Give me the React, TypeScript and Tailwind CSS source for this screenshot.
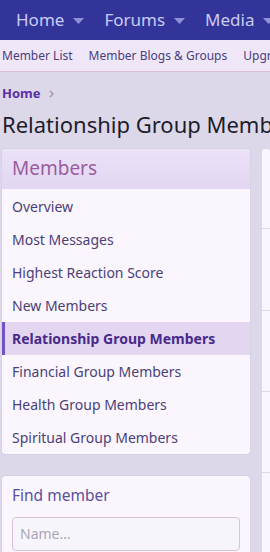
import React from 'react';

const font = { fontFamily: '"Segoe UI", "Noto Sans", "Open Sans", sans-serif' };

const navTabs = ['Home', 'Forums', 'Media'];
const subLinks = ['Member List', 'Member Blogs & Groups', 'Upgrade'];
const memberLinks = [
	'Overview',
	'Most Messages',
	'Highest Reaction Score',
	'New Members',
	'Relationship Group Members',
	'Financial Group Members',
	'Health Group Members',
	'Spiritual Group Members',
];
const ACTIVE = 'Relationship Group Members';

const Caret = () => (
	<svg width="11" height="7" viewBox="0 0 11 7" className="ml-[9px] mt-[2px]">
		<path d="M0 0h11L5.5 6z" fill="#8d91d6" />
	</svg>
);

export default function App() {
	return (
		<div
			className="w-[270px] h-[552px] overflow-hidden bg-[#dcd8ea]"
			style={font}
		>
			{/* top nav */}
			<div className="h-[40px] bg-[#33349a] flex items-center pl-[16px] gap-[20px] whitespace-nowrap">
				{navTabs.map((t) => (
					<div key={t} className="flex items-center text-[17px] text-[#c9cbf2]">
						{t}
						<Caret />
					</div>
				))}
			</div>
			<div className="h-[32px] bg-[#efe7f8] border-b border-[#dcbfd8] flex items-center pl-[2px] gap-[16px] whitespace-nowrap text-[12px] text-[#4a3d7e]">
				{subLinks.map((l) => (
					<span key={l}>{l}</span>
				))}
			</div>

			{/* breadcrumb + title */}
			<div className="pt-[12px] pl-[2px] flex items-center gap-[8px]">
				<span className="text-[13px] font-bold text-[#5b2fa3]">Home</span>
				<svg width="6" height="8" viewBox="0 0 6 8">
					<path d="M1 1l3 3-3 3" stroke="#9a95b0" strokeWidth="1.3" fill="none" />
				</svg>
			</div>
			<div className="pl-[2px] mt-[5px] text-[22px] leading-[30px] text-[#1d1d2b] whitespace-nowrap">
				Relationship Group Members
			</div>

			<div className="flex gap-[12px] mt-[10px] pl-[2px]">
				{/* sidebar */}
				<div className="w-[248px] shrink-0 flex flex-col gap-[22px]">
					<div className="rounded-[3px] overflow-hidden bg-[#fbf6fd] shadow-[0_0_1px_rgba(120,100,160,0.5)]">
						<div className="h-[40px] flex items-center px-[10px] text-[19px] text-[#9a5c9e] bg-gradient-to-b from-[#ebe2f8] to-[#e2d6f2]">
							Members
						</div>
						<div className="pt-[1px]">
							{memberLinks.map((l) => {
								const on = l === ACTIVE;
								return (
									<div
										key={l}
										className={
											on
												? 'h-[33px] flex items-center pl-[7px] border-l-[3px] border-[#7452c4] bg-[#e2d6f1] text-[14px] font-bold text-[#482a8a]'
												: 'h-[33px] flex items-center pl-[10px] text-[14px] text-[#4a3f78]'
										}
									>
										{l}
									</div>
								);
							})}
						</div>
					</div>

					<div className="rounded-[3px] bg-[#fbf6fd] px-[10px] pt-[8px] pb-[10px] shadow-[0_0_1px_rgba(120,100,160,0.5)]">
						<div className="text-[15.5px] text-[#5a4f9c] mb-[10px]">Find member</div>
						<div className="h-[34px] rounded-[4px] border border-[#d8c4d6] bg-[#f7f5fc] flex items-center px-[7px] text-[14px] text-[#a9a6b4]">
							Name...
						</div>
					</div>
				</div>

				{/* main panel, clipped at the right edge */}
				<div className="flex-1 rounded-[3px] bg-[#fbf6fd] h-[420px]">
					<div className="h-[80px] border-b border-[#e6d6e6]" />
					<div className="h-[82px] border-b border-[#e6d6e6]" />
					<div className="h-[81px] border-b border-[#e6d6e6]" />
					<div className="h-[81px] border-b border-[#e6d6e6]" />
				</div>
			</div>
		</div>
	);
}
